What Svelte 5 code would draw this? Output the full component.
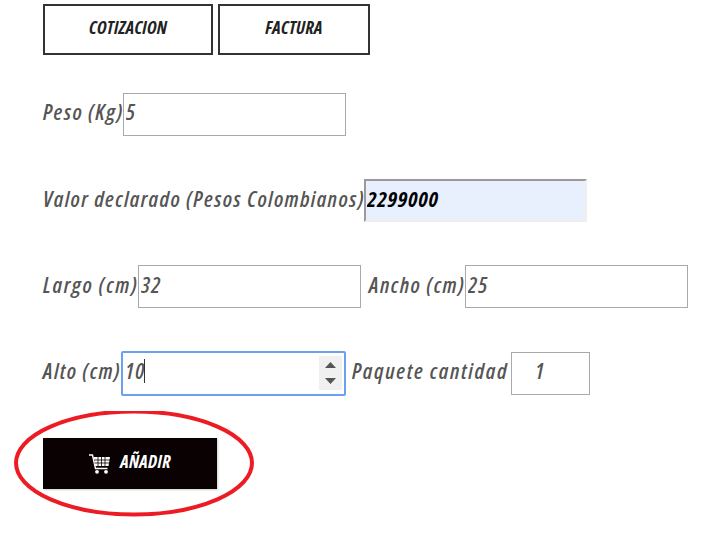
<script>
  // Datos del formulario de envio
  const tabs = [
    { label: 'COTIZACION', width: 170 },
    { label: 'FACTURA', width: 152 }
  ];
</script>

<div class="page">
  <div class="tabs">
    {#each tabs as tab}
      <button class="tab" style="width: {tab.width}px">{tab.label}</button>
    {/each}
  </div>

  <div class="row high">
    <label for="peso" class="w-peso">Peso (Kg)</label>
    <input id="peso" class="field" type="text" value="5" />
  </div>

  <div class="row">
    <label for="valor" class="w-valor">Valor declarado (Pesos Colombianos)</label>
    <input id="valor" class="field autofilled" type="text" value="2299000" />
  </div>

  <div class="row">
    <label for="largo" class="w-largo">Largo (cm)</label>
    <input id="largo" class="field" type="text" value="32" />
    <label for="ancho" class="w-ancho">Ancho (cm)</label>
    <input id="ancho" class="field" type="text" value="25" />
  </div>

  <div class="row high last">
    <span class="label w-alto">Alto (cm)</span>
    <div class="field focused">
      <span>10</span><span class="caret"></span>
      <div class="spinner">
        <svg width="23" height="34" viewBox="0 0 23 34">
          <path d="M11.5 6 L17 12 H6 Z M6 22 H17 L11.5 28 Z" fill="#555" />
        </svg>
      </div>
    </div>
    <label for="cantidad" class="w-paquete">Paquete cantidad</label>
    <input id="cantidad" class="field qty" type="text" value="1" />
  </div>

  <div class="add-wrap">
    <button class="add">
      <svg width="21" height="20" viewBox="0 0 21 20">
        <path d="M0 1 H3.5 L6.5 14.5 H18.5" fill="none" stroke="#fff" stroke-width="1.4" />
        <path d="M4.5 3 H21 L19.5 12 H6.3 Z" fill="#fff" />
        <path d="M5 6 H21 M5.5 9 H20.5 M9 3 V12 M12.5 3 V12 M16 3 V12" stroke="#0a0103" stroke-width="0.8" fill="none" />
        <circle cx="8" cy="17.8" r="1.9" fill="#fff" />
        <circle cx="17" cy="17.8" r="1.9" fill="#fff" />
      </svg>
      <span class="add-text">AÑADIR</span>
    </button>
    <svg class="ring" width="244" height="112" viewBox="0 0 244 112">
      <ellipse cx="120" cy="52" rx="118" ry="51.5" fill="none" stroke="#ed1c24" stroke-width="4" />
    </svg>
  </div>
</div>

<style>
  :global(body) {
    margin: 0;
    background: #fff;
  }

  .page {
    box-sizing: border-box;
    min-height: 535px;
    display: flex;
    flex-direction: column;
    gap: 43px;
    padding: 4px 0 0 43px;
    font-family: "Open Sans", sans-serif;
    font-stretch: 75%;
    font-style: italic;
    font-weight: 600;
    font-size: 22px;
    letter-spacing: 1.35px;
    color: #555;
  }

  .tabs {
    display: flex;
    gap: 5px;
    margin-bottom: -5px;
  }

  .tab {
    height: 51px;
    padding: 0 0 6px;
    background: #fff;
    border: 2px solid #333;
    font: inherit;
    font-stretch: 75%;
    font-weight: 700;
    font-size: 18px;
    letter-spacing: 0.2px;
    color: #222;
  }

  .row {
    display: flex;
    align-items: center;
    height: 43px;
  }

  .row label, .label {
    position: relative;
    top: -3px;
    white-space: nowrap;
  }

  .row.high label, .row.high .label {
    top: -4px;
  }

  .w-peso { width: 80px; }
  .w-valor { width: 321px; }
  .w-largo { width: 95px; letter-spacing: 1.65px; }
  .w-ancho { width: 96px; margin-left: 8px; letter-spacing: 1.45px; }
  .w-alto { width: 78px; }
  .w-paquete { width: 159px; margin-left: 6px; letter-spacing: 1.6px; }

  .row.last {
    margin-top: 1px;
  }

  .field {
    box-sizing: border-box;
    flex: none;
    width: 223px;
    height: 43px;
    padding: 0 2px 6px;
    border: 1px solid #a9a9a9;
    background: #fff;
    outline: none;
    font: inherit;
    font-stretch: 75%;
    letter-spacing: 1.2px;
    color: #555;
  }

  .high .field {
    padding-bottom: 8px;
  }

  .autofilled {
    background: #e8f0fe;
    border: 2px solid #eee;
    border-top-color: #9a9a9a;
    border-left-color: #9a9a9a;
    padding: 0 1px 6px;
    font-weight: 700;
    letter-spacing: 0.7px;
    color: #000;
  }

  .focused {
    position: relative;
    display: flex;
    align-items: center;
    width: 225px;
    height: 45px;
    border: 2px solid #6b9fef;
    border-radius: 2px;
    padding: 0 2px 4px;
  }

  .caret {
    width: 1px;
    height: 24px;
    margin: 2px 0 0 -1px;
    background: #333;
  }

  .spinner {
    position: absolute;
    right: 2px;
    top: 3px;
    bottom: 4px;
    width: 23px;
    background: #f0f0f0;
    display: flex;
  }

  .qty {
    width: 79px;
    padding-right: 23px;
    text-align: center;
  }

  .add-wrap {
    position: relative;
  }

  .add {
    display: flex;
    align-items: center;
    justify-content: center;
    gap: 10px;
    width: 174px;
    height: 51px;
    padding: 0;
    border: 0;
    background: #0a0103;
    box-shadow: 1px 1px 2px rgba(0, 0, 0, 0.2);
    color: #fff;
    font: inherit;
    font-stretch: 75%;
    font-weight: 700;
    font-size: 18px;
    letter-spacing: 0.3px;
  }

  .add-text {
    padding-bottom: 5px;
  }

  .ring {
    position: absolute;
    left: -29px;
    top: -27px;
    pointer-events: none;
  }
</style>
